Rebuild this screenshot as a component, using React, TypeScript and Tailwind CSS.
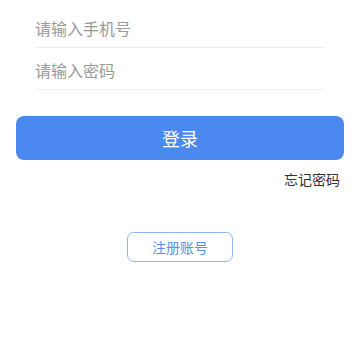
import { useState } from 'react'

export default function App() {
  const [phone, setPhone] = useState('')
  const [password, setPassword] = useState('')

  return (
    <div className="min-h-[360px] w-full bg-white pt-[6px] font-['Noto_Sans_CJK_SC','Noto_Sans',sans-serif]">
      {/* inputs */}
      <div className="mx-[35px]">
        <div className="flex h-[42px] items-center border-b border-[#eeeeee] pt-[3px]">
          <input
            value={phone}
            onChange={(e) => setPhone(e.target.value)}
            placeholder="请输入手机号"
            className="w-full bg-transparent text-[16px] text-[#333] outline-none placeholder:text-[#999999]"
          />
        </div>
        <div className="flex h-[42px] items-center border-b border-[#eeeeee] pt-[3px]">
          <input
            type="password"
            value={password}
            onChange={(e) => setPassword(e.target.value)}
            placeholder="请输入密码"
            className="w-full bg-transparent text-[16px] text-[#333] outline-none placeholder:text-[#999999]"
          />
        </div>
      </div>

      <div className="mx-[16px] mt-[26px]">
        <button className="flex h-[44px] w-full items-center justify-center rounded-[8px] bg-[#4b88ef] text-[18px] text-white">
          登录
        </button>
      </div>

      <div className="mt-[9px] flex justify-end pr-[20px]">
        <span className="text-[14px] leading-[20px] text-[#333]">忘记密码</span>
      </div>

      <div className="mt-[43px] flex justify-center">
        <button className="flex h-[30px] w-[106px] items-center justify-center rounded-[7px] border border-[#8cb5f7] text-[14px] text-[#5a8ff0]">
          注册账号
        </button>
      </div>
    </div>
  )
}
